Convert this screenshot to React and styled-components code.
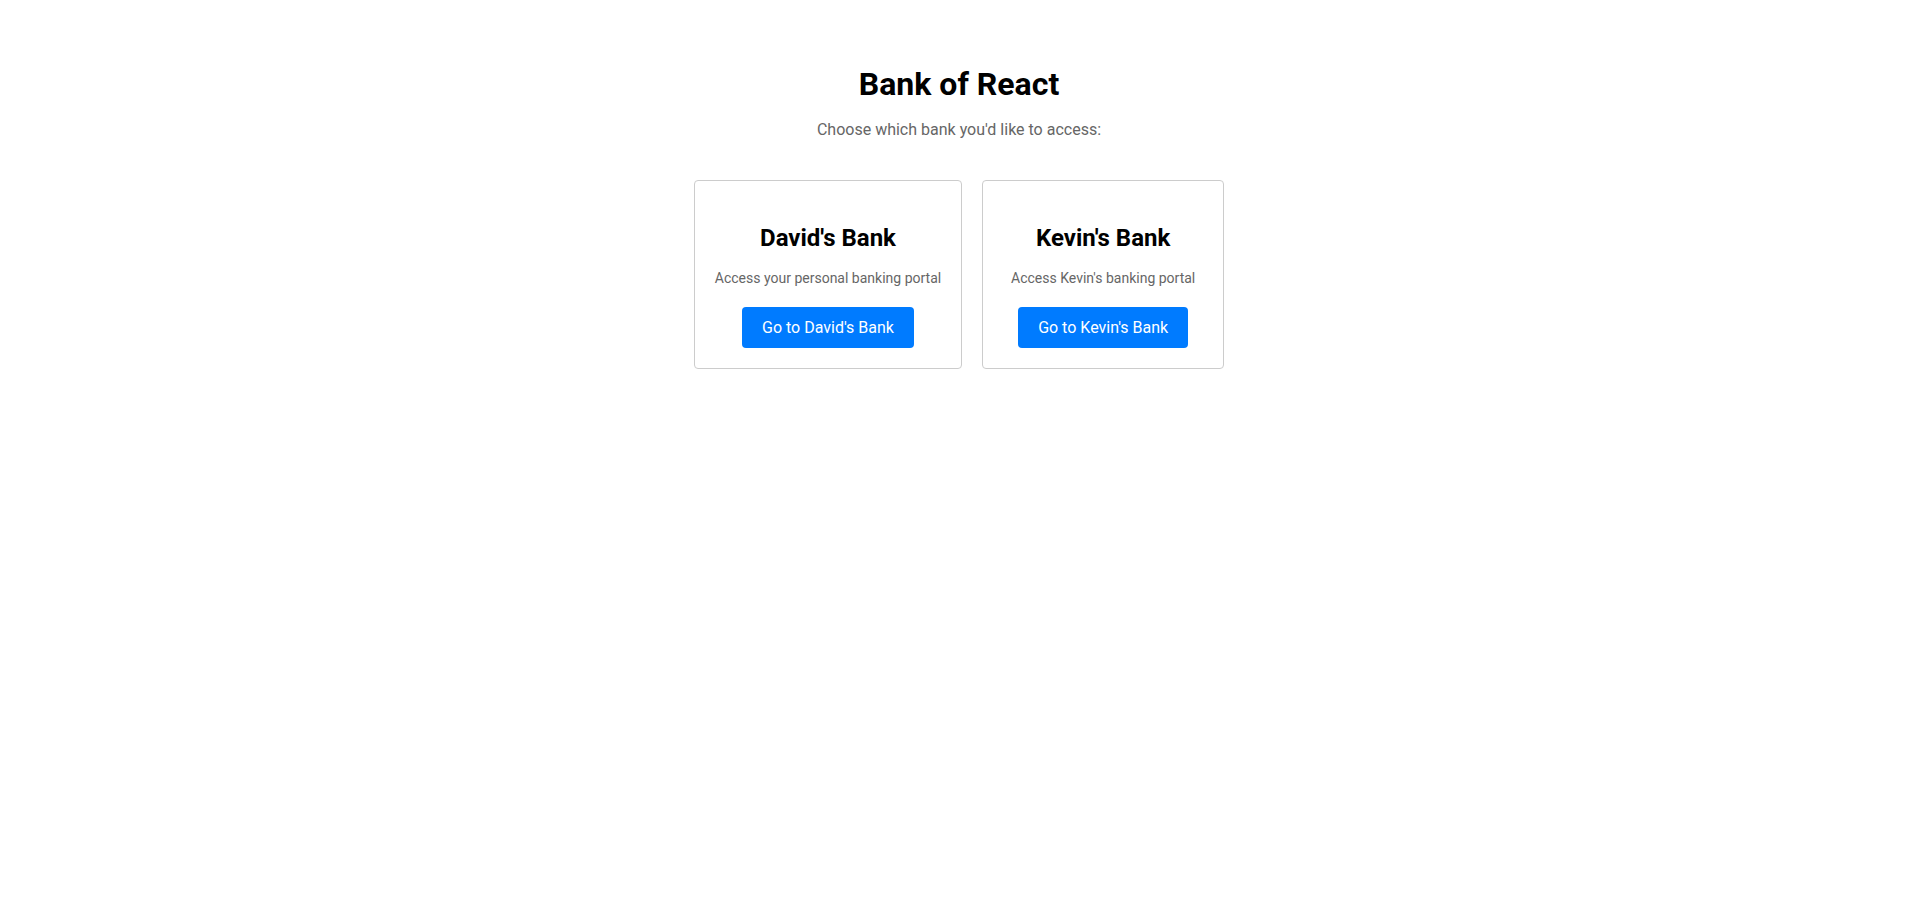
import React from 'react';
import styled, { createGlobalStyle } from 'styled-components';

const GlobalStyle = createGlobalStyle`
  body {
    margin: 0;
    background: #fff;
    font-family: Roboto, "Liberation Sans", Arial, sans-serif;
    color: #000;
  }
`;

const Page = styled.div`
  display: flex;
  flex-direction: column;
  align-items: center;
  padding-top: 64px;
  text-align: center;
`;

const Title = styled.h1`
  margin: 0;
  font-size: 32px;
  line-height: 40px;
  font-weight: 700;
`;

const Subtitle = styled.p`
  margin: 16px 0 0;
  font-size: 16px;
  line-height: 20px;
  color: #666;
`;

const CardRow = styled.div`
  display: flex;
  justify-content: center;
  gap: 20px;
  margin-top: 40px;
`;

const Card = styled.div`
  display: flex;
  flex-direction: column;
  align-items: center;
  min-width: 200px;
  padding: 20px;
  border: 1px solid #ccc;
  border-radius: 4px;
`;

const CardTitle = styled.h2`
  margin: 23px 0 0;
  font-size: 24px;
  line-height: 28px;
  font-weight: 700;
`;

const CardText = styled.p`
  margin: 17px 0 0;
  font-size: 14px;
  line-height: 18px;
  color: #666;
`;

const Button = styled.button`
  margin-top: 20px;
  padding: 10px 20px;
  border: none;
  border-radius: 4px;
  background-color: #007bff;
  color: #fff;
  font-family: inherit;
  font-size: 16px;
  line-height: 21px;
  cursor: pointer;

  &:hover {
    background-color: #0069d9;
  }
`;

const banks = [
  { name: "David's Bank", text: 'Access your personal banking portal' },
  { name: "Kevin's Bank", text: "Access Kevin's banking portal" },
];

export default function App() {
  return (
    <>
      <GlobalStyle />
      <Page>
        <Title>Bank of React</Title>
        <Subtitle>Choose which bank you'd like to access:</Subtitle>
        <CardRow>
          {banks.map((bank) => (
            <Card key={bank.name}>
              <CardTitle>{bank.name}</CardTitle>
              <CardText>{bank.text}</CardText>
              <Button type="button">Go to {bank.name}</Button>
            </Card>
          ))}
        </CardRow>
      </Page>
    </>
  );
}
